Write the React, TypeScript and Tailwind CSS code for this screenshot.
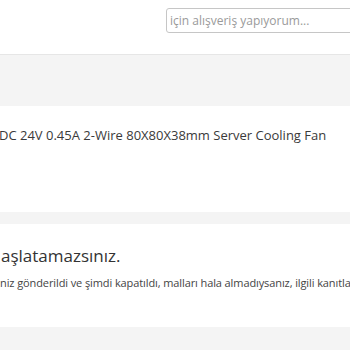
const App = () => {
  return (
    <div className="w-[350px] h-[350px] overflow-hidden bg-[#f4f4f4] font-['Open_Sans',sans-serif] text-[#333]">
      {/* header */}
      <div className="h-[55px] bg-white border-b border-[#e6e6e6] flex">
        <div className="ml-[166px] mt-[8px] h-[25px] w-[230px] shrink-0 border border-[#c6c6c6] rounded-[3px] flex items-center pl-[3px]">
          <input
            className="w-full outline-none text-[12px] text-[#333] placeholder:text-[#9a9a9a] bg-transparent"
            placeholder="için alışveriş yapıyorum..."
          />
        </div>
      </div>

      <div className="h-[51px]" />

      {/* product */}
      <div className="h-[106px] bg-white pt-[20px]">
        <p className="whitespace-nowrap text-[13px] leading-[18px] text-[#3a3a3a] -ml-[1px]">
          DC 24V 0.45A 2-Wire 80X80X38mm Server Cooling Fan
        </p>
      </div>

      <div className="h-[12px]" />

      {/* dispute */}
      <div className="h-[103px] bg-white pt-[20px]">
        <h2 className="whitespace-nowrap text-[17px] leading-[24px] text-[#333] ml-[1px]">aşlatamazsınız.</h2>
        <p className="whitespace-nowrap text-[11px] leading-[16px] tracking-[-0.1px] text-[#444] mt-[7px]">
          niz gönderildi ve şimdi kapatıldı, malları hala almadıysanız, ilgili kanıtları sağlayarak
        </p>
      </div>
    </div>
  )
}

export default App
